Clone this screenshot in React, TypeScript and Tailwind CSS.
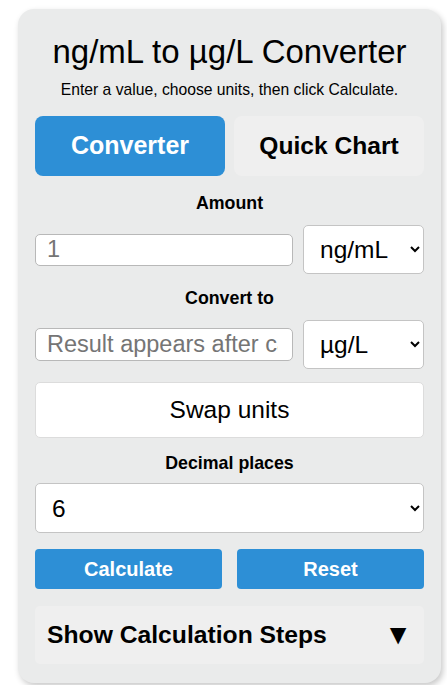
import React from "react";

export default function App() {
  return (
    <div className="min-h-[685px] bg-white pt-[9px] pl-[18px]" style={{ fontFamily: '"Liberation Sans", Arial, sans-serif' }}>
      <div className="w-[423px] rounded-[16px] bg-[#eaebeb] px-[17px] pt-[27px] pb-[19px] shadow-[2px_3px_6px_rgba(0,0,0,0.22)] text-black">
        <h1 className="text-center text-[33px] leading-[32px] font-normal">ng/mL to µg/L Converter</h1>
        <p className="mt-[14px] text-center text-[15.7px] leading-[16px]">Enter a value, choose units, then click Calculate.</p>
        <div className="mt-[18px] grid grid-cols-2 gap-[9px]">
          <button className="h-[60px] rounded-[8px] bg-[#2d8fd6] text-[25px] font-bold text-white">Converter</button>
          <button className="h-[60px] rounded-[8px] bg-[#efefef] text-[24.6px] font-bold text-black">Quick Chart</button>
        </div>
        <div className="mt-[18px] text-center text-[17.8px] leading-[18px] font-bold">Amount</div>
        <div className="mt-[13px] flex items-center gap-[10px]">
          <input
            className="h-[32px] w-[258px] rounded-[5px] border border-[#b8b8b8] bg-white px-[11px] text-[23.5px] text-[#757575] outline-none placeholder:text-[#757575]"
            placeholder="1"
          />
          <select className="h-[49px] w-[121px] rounded-[5px] border border-[#c4c4c4] bg-white pl-[12px] pr-[6px] text-[24.5px] text-black" defaultValue="ng">
            <option value="ng">ng/mL</option>
            <option value="ug">µg/L</option>
          </select>
        </div>
        <div className="mt-[15px] text-center text-[17.8px] leading-[18px] font-bold">Convert to</div>
        <div className="mt-[13px] flex items-center gap-[10px]">
          <input
            className="h-[33px] w-[258px] rounded-[5px] border border-[#b8b8b8] bg-white pl-[11px] pr-[14px] text-[23.5px] text-[#757575] outline-none placeholder:text-[#757575]"
            placeholder="Result appears after calculation"
            readOnly
          />
          <select className="h-[49px] w-[121px] rounded-[5px] border border-[#c4c4c4] bg-white pl-[12px] pr-[6px] text-[24.5px] text-black" defaultValue="ug">
            <option value="ng">ng/mL</option>
            <option value="ug">µg/L</option>
          </select>
        </div>
        <button className="mt-[13px] h-[56px] w-full rounded-[5px] border border-[#dcdcdc] bg-white text-[24.5px] text-black">Swap units</button>
        <div className="mt-[16px] text-center text-[17.8px] leading-[18px] font-bold">Decimal places</div>
        <select className="mt-[11px] h-[50px] w-full rounded-[5px] border border-[#c4c4c4] bg-white pl-[12px] pr-[6px] text-[24.5px] text-black" defaultValue="6">
          <option value="2">2</option>
          <option value="4">4</option>
          <option value="6">6</option>
          <option value="8">8</option>
        </select>
        <div className="mt-[16px] flex justify-between">
          <button className="h-[40px] w-[187px] rounded-[4px] bg-[#2d8fd6] text-[20px] font-bold text-white">Calculate</button>
          <button className="h-[40px] w-[187px] rounded-[4px] bg-[#2d8fd6] text-[20px] font-bold text-white">Reset</button>
        </div>
        <div className="mt-[17px] flex h-[58px] items-center justify-between rounded-[5px] bg-[#efefef] pl-[12px] pr-[12px]">
          <span className="text-[24.7px] font-bold">Show Calculation Steps</span>
          <span className="text-[28px] leading-none">▼</span>
        </div>
      </div>
    </div>
  );
}
